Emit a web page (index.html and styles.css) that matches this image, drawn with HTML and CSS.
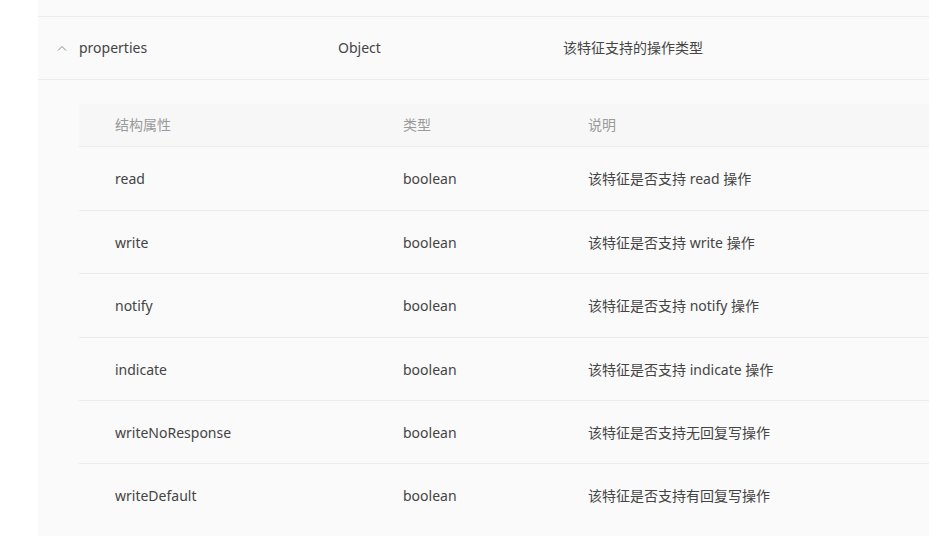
FILE: index.html
```html
<!DOCTYPE html>
<html lang="zh">
<head>
<meta charset="utf-8">
<link rel="stylesheet" href="styles.css">
</head>
<body>
<div class="panel">
  <div class="top-spacer"></div>
  <div class="row main-row">
    <div class="cell toggle">
      <svg width="10" height="6" viewBox="0 0 10 6"><path d="M1 5.5 L5 1.5 L9 5.5" fill="none" stroke="#8c8c8c" stroke-width="1"/></svg>
    </div>
    <div class="cell">properties</div>
    <div class="cell">Object</div>
    <div class="cell">该特征支持的操作类型</div>
  </div>
  <div class="expanded">
    <div class="sub-table">
      <div class="sub-row sub-head">
        <div class="sub-cell">结构属性</div>
        <div class="sub-cell">类型</div>
        <div class="sub-cell">说明</div>
      </div>
      <div class="sub-row">
        <div class="sub-cell">read</div>
        <div class="sub-cell">boolean</div>
        <div class="sub-cell">该特征是否支持 read 操作</div>
      </div>
      <div class="sub-row">
        <div class="sub-cell">write</div>
        <div class="sub-cell">boolean</div>
        <div class="sub-cell">该特征是否支持 write 操作</div>
      </div>
      <div class="sub-row">
        <div class="sub-cell">notify</div>
        <div class="sub-cell">boolean</div>
        <div class="sub-cell">该特征是否支持 notify 操作</div>
      </div>
      <div class="sub-row">
        <div class="sub-cell">indicate</div>
        <div class="sub-cell">boolean</div>
        <div class="sub-cell">该特征是否支持 indicate 操作</div>
      </div>
      <div class="sub-row">
        <div class="sub-cell">writeNoResponse</div>
        <div class="sub-cell">boolean</div>
        <div class="sub-cell">该特征是否支持无回复写操作</div>
      </div>
      <div class="sub-row">
        <div class="sub-cell">writeDefault</div>
        <div class="sub-cell">boolean</div>
        <div class="sub-cell">该特征是否支持有回复写操作</div>
      </div>
    </div>
  </div>
</div>
</body>
</html>
```

FILE: styles.css
```css
html, body {
  margin: 0;
  padding: 0;
  background: #ffffff;
  overflow: hidden;
}
body {
  font-family: "Noto Sans", "Noto Sans CJK SC", sans-serif;
  font-size: 14px;
  color: #444444;
  height: 536px;
}
.panel {
  margin-left: 38px;
  background: #fafafa;
  min-height: 536px;
}
.top-spacer {
  height: 16px;
  border-bottom: 1px solid #ececec;
}
.row {
  display: grid;
  grid-template-columns: 41px 259px 225px 1fr;
  border-bottom: 1px solid #ececec;
}
.cell {
  padding: 20px 0;
  line-height: 22px;
  white-space: nowrap;
}
.toggle {
  display: flex;
  align-items: center;
  padding-left: 19px;
}
.expanded {
  padding: 24px 0 0 41px;
}
.sub-table {
  background: #fafafa;
}
.sub-row {
  display: grid;
  grid-template-columns: 288px 185px 1fr;
  border-bottom: 1px solid #ececec;
}
.sub-row:last-child {
  border-bottom: none;
}
.sub-cell {
  padding: 21px 0 19px 36px;
  line-height: 22.4px;
  white-space: nowrap;
}
.sub-head {
  background: #f7f7f7;
  border-top-left-radius: 4px;
  color: #9a9a9a;
}
.sub-head .sub-cell {
  padding: 10px 0 10px 36px;
}
```
